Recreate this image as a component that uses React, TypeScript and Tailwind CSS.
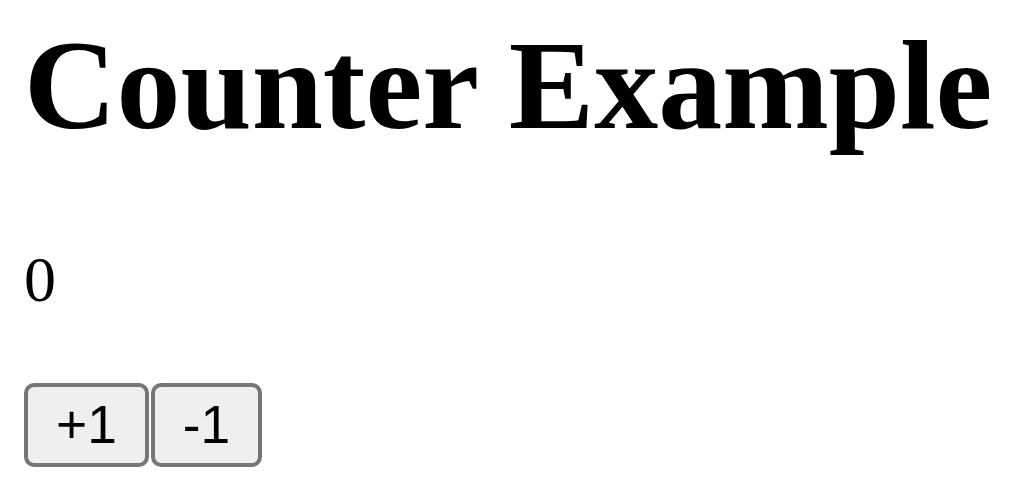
import { useState } from "react"

const btn =
  "rounded-[10px] border-4 border-[#767676] bg-[#efefef] px-[28px] py-[7px] font-['Liberation_Sans',Arial,sans-serif] text-[53.33px] leading-[62px] text-black"

export default function App() {
  const [count, setCount] = useState(0)

  return (
    <div className="min-h-screen bg-white pl-[24px] pt-[12px] font-['Liberation_Serif','Times_New_Roman',serif] text-black">
      <h1 className="mb-[84px] text-[128px] font-bold leading-[147px]">Counter Example</h1>
      <p className="mb-[66px] text-[64px] leading-[74px]">{count}</p>
      <div className="flex gap-[2px]">
        <button onClick={() => setCount(count + 1)} className={btn}>
          +1
        </button>
        <button onClick={() => setCount(count - 1)} className={btn}>
          -1
        </button>
      </div>
    </div>
  )
}
